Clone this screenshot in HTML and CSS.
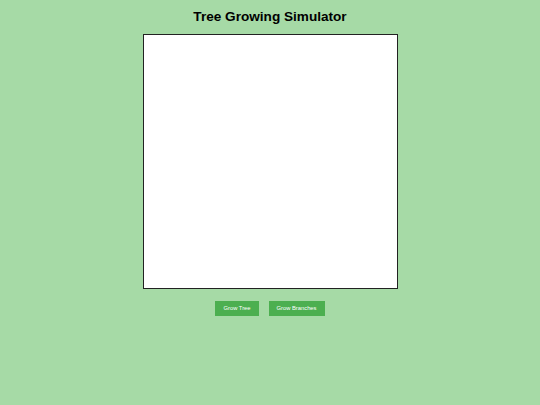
FILE: index.html
```html
<!DOCTYPE html>
<html>
<head>
<meta charset="utf-8">
<link rel="stylesheet" href="styles.css">
</head>
<body>
<div class="page">
  <h1 class="title">Tree Growing Simulator</h1>
  <div class="canvas"></div>
  <div class="controls">
    <button class="btn">Grow Tree</button>
    <button class="btn">Grow Branches</button>
  </div>
</div>
</body>
</html>
```
FILE: styles.css
```css
html, body {
  margin: 0;
  padding: 0;
  background: #a6daa6;
}
.page {
  display: flex;
  flex-direction: column;
  align-items: center;
  font-family: "Liberation Sans", Arial, sans-serif;
}
.title {
  margin: 8px 0 0 0;
  height: 26px;
  font-size: 13.6px;
  font-weight: bold;
  color: #000;
  line-height: 18px;
}
.canvas {
  box-sizing: border-box;
  width: 255px;
  height: 255px;
  background: #fff;
  border: 1.5px solid #222;
}
.controls {
  display: flex;
  gap: 10px;
  margin-top: 12px;
}
.btn {
  height: 15px;
  padding: 0 8px;
  border: none;
  background: #4caf50;
  color: #fff;
  font-family: "Liberation Sans", Arial, sans-serif;
  font-size: 5.8px;
  line-height: 15px;
}
```
